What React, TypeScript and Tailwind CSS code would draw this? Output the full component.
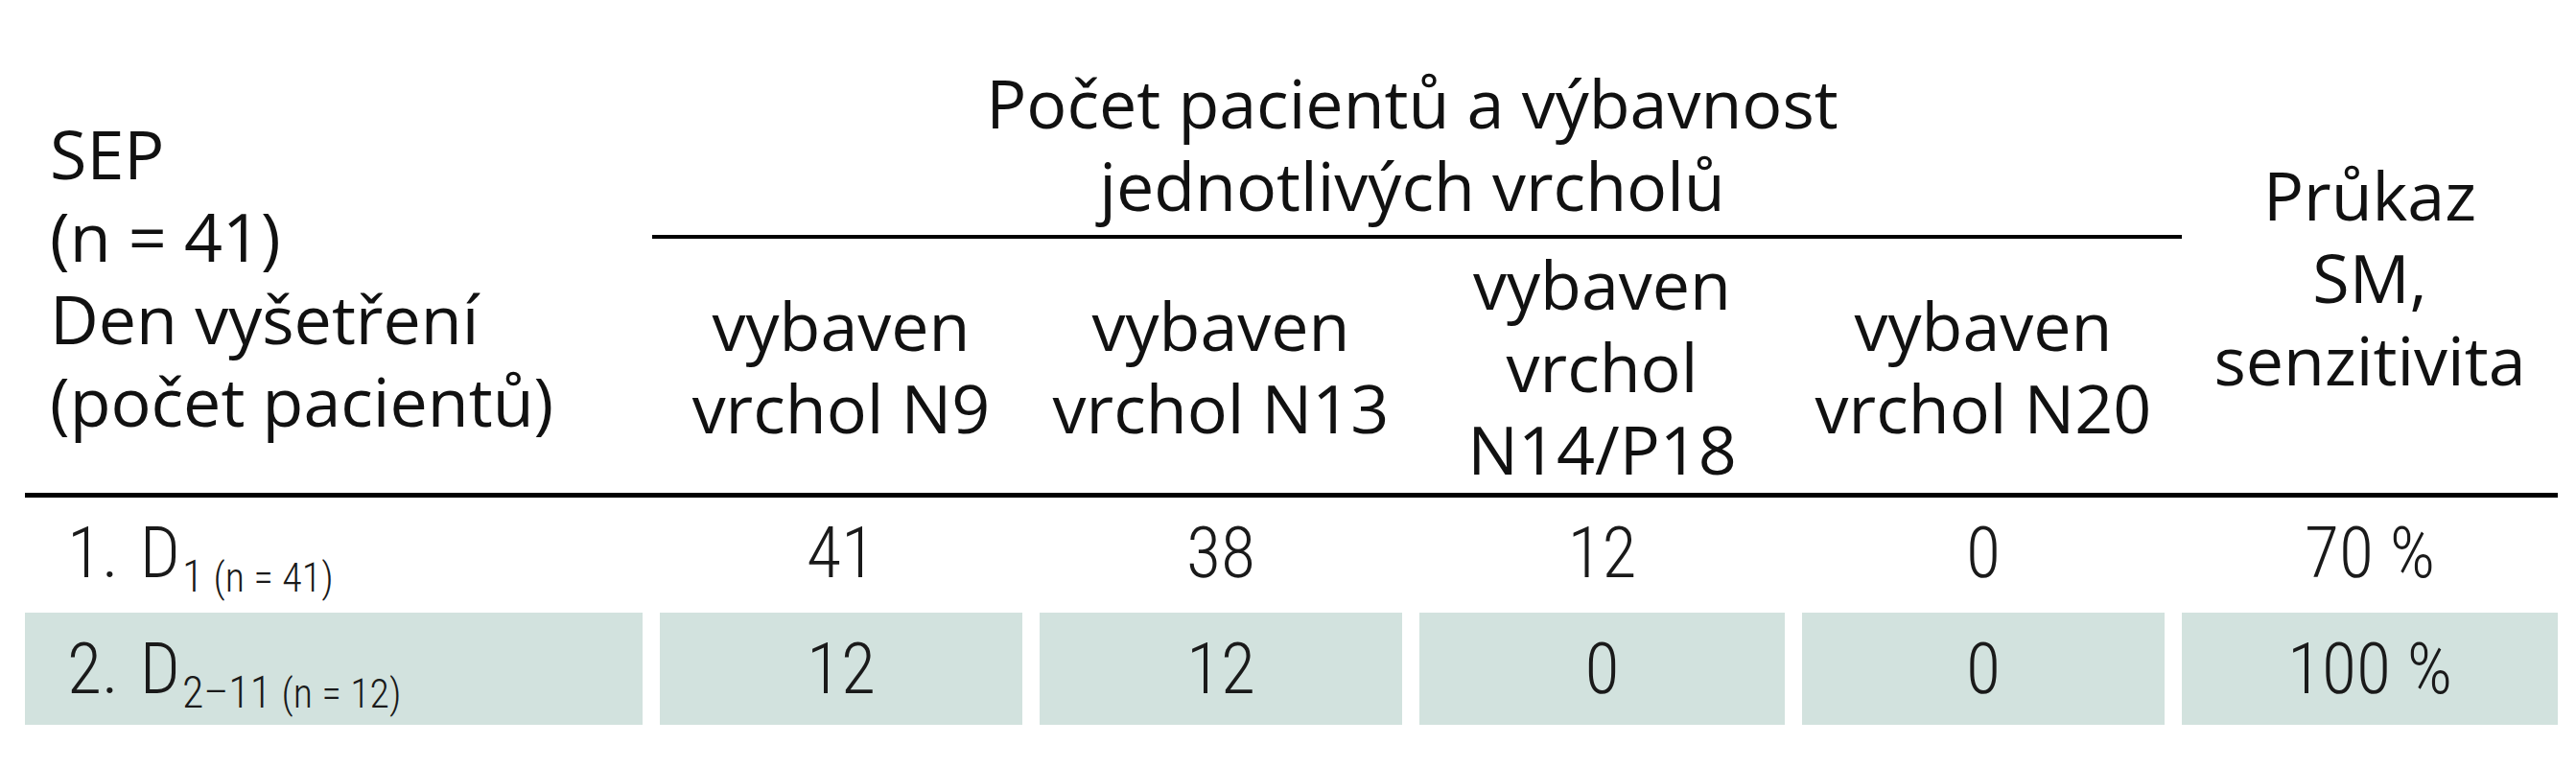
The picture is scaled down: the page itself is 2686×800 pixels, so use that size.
const head = "font-['Open_Sans','Noto_Sans',sans-serif] text-[70px] leading-[86px] text-[#111]";
const body = "font-['Roboto_Condensed','Liberation_Sans_Narrow','Liberation_Sans',sans-serif] font-light text-[74px] leading-none text-[#1a1a1a]";

const subCols = [
  ['vybaven', 'vrchol N9'],
  ['vybaven', 'vrchol N13'],
  ['vybaven', 'vrchol', 'N14/P18'],
  ['vybaven', 'vrchol N20'],
];

const rows = [
  { n: '1.', sub: '1', cnt: '(n = 41)', vals: ['41', '38', '12', '0', '70 %'], shaded: false },
  { n: '2.', sub: '2–11', cnt: '(n = 12)', vals: ['12', '12', '0', '0', '100 %'], shaded: true },
];

export default function App() {
  return (
    <div className="w-[2686px] h-[800px] bg-white pt-[64px] pl-[26px]">
      <div className="grid grid-cols-[644px_378px_378px_381px_378px_392px] grid-rows-[172px_13px_265px_5px_115px_122px] gap-x-[18px]">
        {/* left header */}
        <div className={`col-start-1 row-start-1 row-span-3 flex flex-col justify-center pl-[26px] ${head}`}>
          <div>SEP</div>
          <div>(n = 41)</div>
          <div>Den vyšetření</div>
          <div>(počet pacientů)</div>
        </div>

        {/* group header */}
        <div className={`col-start-2 col-span-4 row-start-1 text-center ${head}`}>
          <div>Počet pacientů a výbavnost</div>
          <div>jednotlivých vrcholů</div>
        </div>
        <div className="col-start-2 col-span-4 row-start-2 flex items-end -ml-[8px] -mr-[18px]">
          <div className="h-[4px] w-full bg-black" />
        </div>

        {subCols.map((lines, i) => (
          <div key={i} className={`row-start-3 flex flex-col items-center justify-center text-center ${head}`} style={{ gridColumnStart: i + 2 }}>
            {lines.map((l) => (
              <div key={l}>{l}</div>
            ))}
          </div>
        ))}

        <div className={`col-start-6 row-start-1 row-span-3 flex flex-col items-center justify-center text-center ${head}`}>
          <div>Průkaz</div>
          <div>SM,</div>
          <div>senzitivita</div>
        </div>

        {/* rule under header */}
        <div className="col-start-1 col-span-6 row-start-4 bg-black" />

        {rows.map((r, ri) => (
          <div key={ri} className="contents">
            <div
              className={`col-start-1 flex items-center pl-[44px] ${body} ${r.shaded ? 'bg-[#d2e2de] mt-[5px]' : ''}`}
              style={{ gridRowStart: ri + 5 }}
            >
              <span>{r.n}</span>
              <span className="ml-[22px]">D</span>
              <span className="relative top-[24px] ml-[2px] text-[46px]">
                {r.sub}&nbsp;<span className="text-[42px]">{r.cnt}</span>
              </span>
            </div>
            {r.vals.map((v, vi) => (
              <div
                key={vi}
                className={`flex items-center justify-center ${body} ${r.shaded ? 'bg-[#d2e2de] mt-[5px]' : ''}`}
                style={{ gridRowStart: ri + 5, gridColumnStart: vi + 2 }}
              >
                {v}
              </div>
            ))}
          </div>
        ))}
      </div>
    </div>
  );
}
